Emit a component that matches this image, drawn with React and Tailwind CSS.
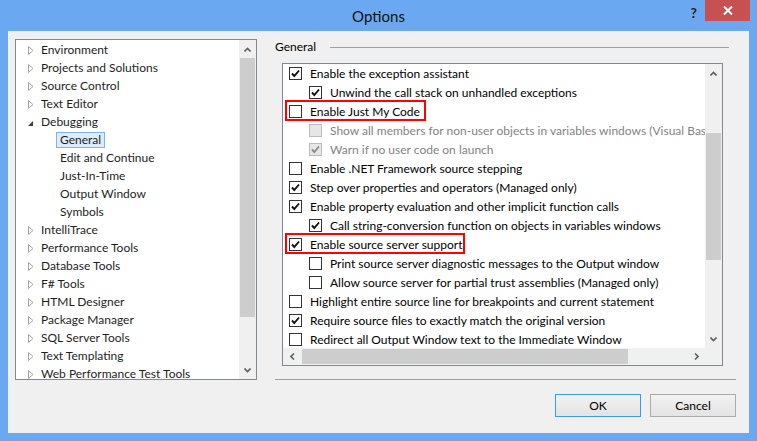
import React from 'react';

const FONT = "font-['Lato','Liberation_Sans',sans-serif]";

const treeItems = [
  { label: 'Environment', arrow: 'closed' },
  { label: 'Projects and Solutions', arrow: 'closed' },
  { label: 'Source Control', arrow: 'closed' },
  { label: 'Text Editor', arrow: 'closed' },
  { label: 'Debugging', arrow: 'open' },
  { label: 'General', child: true, selected: true },
  { label: 'Edit and Continue', child: true },
  { label: 'Just-In-Time', child: true },
  { label: 'Output Window', child: true },
  { label: 'Symbols', child: true },
  { label: 'IntelliTrace', arrow: 'closed' },
  { label: 'Performance Tools', arrow: 'closed' },
  { label: 'Database Tools', arrow: 'closed' },
  { label: 'F# Tools', arrow: 'closed' },
  { label: 'HTML Designer', arrow: 'closed' },
  { label: 'Package Manager', arrow: 'closed' },
  { label: 'SQL Server Tools', arrow: 'closed' },
  { label: 'Text Templating', arrow: 'closed' },
  { label: 'Web Performance Test Tools', arrow: 'closed' },
];

const options = [
  { label: 'Enable the exception assistant', checked: true },
  { label: 'Unwind the call stack on unhandled exceptions', checked: true, indent: true },
  { label: 'Enable Just My Code', highlight: 'w-[141px]' },
  { label: 'Show all members for non-user objects in variables windows (Visual Basic only)', indent: true, disabled: true },
  { label: 'Warn if no user code on launch', indent: true, disabled: true, checked: true },
  { label: 'Enable .NET Framework source stepping' },
  { label: 'Step over properties and operators (Managed only)', checked: true },
  { label: 'Enable property evaluation and other implicit function calls', checked: true },
  { label: 'Call string-conversion function on objects in variables windows', checked: true, indent: true },
  { label: 'Enable source server support', checked: true, highlight: 'w-[180px]' },
  { label: 'Print source server diagnostic messages to the Output window', indent: true },
  { label: 'Allow source server for partial trust assemblies (Managed only)', indent: true },
  { label: 'Highlight entire source line for breakpoints and current statement' },
  { label: 'Require source files to exactly match the original version', checked: true },
  { label: 'Redirect all Output Window text to the Immediate Window' },
];

function Chevron({ dir }) {
  const paths = {
    up: 'M0.5 4.5 L3.5 1.5 L6.5 4.5',
    down: 'M0.5 0.5 L3.5 3.5 L6.5 0.5',
  };
  const hpaths = {
    left: 'M4 0.5 L1 3.5 L4 6.5',
    right: 'M1 0.5 L4 3.5 L1 6.5',
  };
  if (dir === 'left' || dir === 'right') {
    return (
      <svg width="5" height="7" viewBox="0 0 5 7">
        <path d={hpaths[dir]} fill="none" stroke="#606060" strokeWidth="1.6" />
      </svg>
    );
  }
  return (
    <svg width="7" height="5" viewBox="0 0 7 5">
      <path d={paths[dir]} fill="none" stroke="#606060" strokeWidth="1.6" />
    </svg>
  );
}

function TreeArrow({ type }) {
  if (type === 'open') {
    return (
      <svg width="7" height="7" viewBox="0 0 7 7" className="mr-[7px] mt-[3px]">
        <path d="M6 1 L6 6 L1 6 Z" fill="#3c3c3c" />
      </svg>
    );
  }
  return (
    <svg width="6" height="9" viewBox="0 0 6 9" className="mr-[7px] ml-[1px]">
      <path d="M0.5 0.5 L5 4.5 L0.5 8.5 Z" fill="#fff" stroke="#a6a6a6" />
    </svg>
  );
}

function Checkbox({ checked, disabled }) {
  return (
    <span
      className={`w-[13px] h-[13px] shrink-0 border flex items-center justify-center ${
        disabled ? 'border-[#bcbcbc] bg-[#e6e6e6]' : 'border-[#333333] bg-white'
      }`}
    >
      {checked && (
        <svg width="11" height="11" viewBox="0 0 11 11">
          <path
            d="M2 5.5 L4.3 8 L9 2.5"
            fill="none"
            stroke={disabled ? '#8c8c8c' : '#111'}
            strokeWidth="1.9"
          />
        </svg>
      )}
    </span>
  );
}

function TreePanel() {
  return (
    <div className="w-[242px] h-[341px] border border-[#828790] bg-white flex shrink-0">
      <div className="flex-1 overflow-hidden pt-[1px] text-[12px] text-[#1e1e1e]">
        {treeItems.map((item) => (
          <div key={item.label} className="h-[18px] flex items-center whitespace-nowrap">
            {item.child ? (
              item.selected ? (
                <span className="ml-[40px] h-[16px] px-[3px] flex items-center border border-[#7eb4ea] bg-[#dcecfc]">
                  {item.label}
                </span>
              ) : (
                <span className="ml-[44px]">{item.label}</span>
              )
            ) : (
              <span className="pl-[11px] flex items-center">
                <TreeArrow type={item.arrow} />
                {item.label}
              </span>
            )}
          </div>
        ))}
      </div>
      <div className="w-[17px] bg-[#f0f0f0] flex flex-col">
        <div className="h-[18px] flex items-center justify-center">
          <Chevron dir="up" />
        </div>
        <div className="h-[259px] mx-[1px] bg-[#cdcdcd]" />
        <div className="flex-1" />
        <div className="h-[18px] flex items-center justify-center">
          <Chevron dir="down" />
        </div>
      </div>
    </div>
  );
}

function OptionsList() {
  return (
    <div className="ml-[7px] w-[441px] h-[303px] border border-[#828790] bg-white flex flex-col">
      <div className="flex h-[284px]">
        <div className="flex-1 overflow-hidden text-[12px]">
          {options.map((o) => (
            <div
              key={o.label}
              className={`relative h-[19px] flex items-center gap-[8px] whitespace-nowrap ${
                o.indent ? 'pl-[26px]' : 'pl-[6px]'
              } ${o.disabled ? 'text-[#838383]' : 'text-black'}`}
            >
              <Checkbox checked={o.checked} disabled={o.disabled} />
              <span>{o.label}</span>
              {o.highlight && (
                <span
                  className={`absolute left-[2px] top-[-2px] h-[21px] border-2 border-[#ff0000] ${o.highlight}`}
                />
              )}
            </div>
          ))}
        </div>
        <div className="w-[17px] bg-[#f0f0f0] flex flex-col">
          <div className="h-[18px] flex items-center justify-center">
            <Chevron dir="up" />
          </div>
          <div className="h-[51px]" />
          <div className="h-[127px] mx-[1px] bg-[#cdcdcd]" />
          <div className="flex-1" />
          <div className="h-[18px] flex items-center justify-center">
            <Chevron dir="down" />
          </div>
        </div>
      </div>
      <div className="flex h-[17px] bg-[#f0f0f0]">
        <div className="w-[19px] flex items-center justify-center">
          <Chevron dir="left" />
        </div>
        <div className="w-[326px] my-[1px] bg-[#cdcdcd]" />
        <div className="flex-1 flex items-center justify-end pr-[6px]">
          <Chevron dir="right" />
        </div>
        <div className="w-[17px]" />
      </div>
    </div>
  );
}

function DialogButton({ children, isDefault }) {
  return (
    <button
      className={`w-[86px] h-[23px] border text-[12px] text-black bg-linear-to-b from-[#f2f2f2] to-[#e3e3e3] ${
        isDefault ? 'border-[#3c9be6]' : 'border-[#acacac]'
      }`}
    >
      {children}
    </button>
  );
}

export default function App() {
  return (
    <div className={`w-[757px] h-[441px] bg-[#6aa9f1] flex flex-col ${FONT}`}>
      <div className="h-[31px] grid grid-cols-[1fr_auto_1fr] shrink-0">
        <div />
        <div className="text-[15px] text-[#111] pt-[5px]">Options</div>
        <div className="flex justify-end items-start pr-[7px]">
          <span className="text-[14px] font-bold text-[#222] mt-[2px] mr-[8px]">?</span>
          <span className="w-[45px] h-[21px] bg-[#c75050] flex items-center justify-center">
            <svg width="10" height="9" viewBox="0 0 10 9">
              <path d="M1 0.5 L9 8.5 M9 0.5 L1 8.5" stroke="#fff" strokeWidth="2" />
            </svg>
          </span>
        </div>
      </div>
      <div className="mx-[8px] mb-[8px] flex-1 bg-[#f0f0f0] flex flex-col">
        <div className="flex pt-[8px] pl-[7px]">
          <TreePanel />
          <div className="ml-[18px] w-[461px] flex flex-col">
            <div className="h-[16px] flex items-center text-[12px] text-black">
              <span>General</span>
              <span className="flex-1 h-px bg-[#a0a0a0] ml-[14px] mr-[7px]" />
            </div>
            <div className="mt-[8px]">
              <OptionsList />
            </div>
            <div className="mt-[13px] h-px bg-[#a0a0a0]" />
          </div>
        </div>
        <div className="mt-[14px] flex justify-end gap-[9px] pr-[13px]">
          <DialogButton isDefault>OK</DialogButton>
          <DialogButton>Cancel</DialogButton>
        </div>
      </div>
    </div>
  );
}
